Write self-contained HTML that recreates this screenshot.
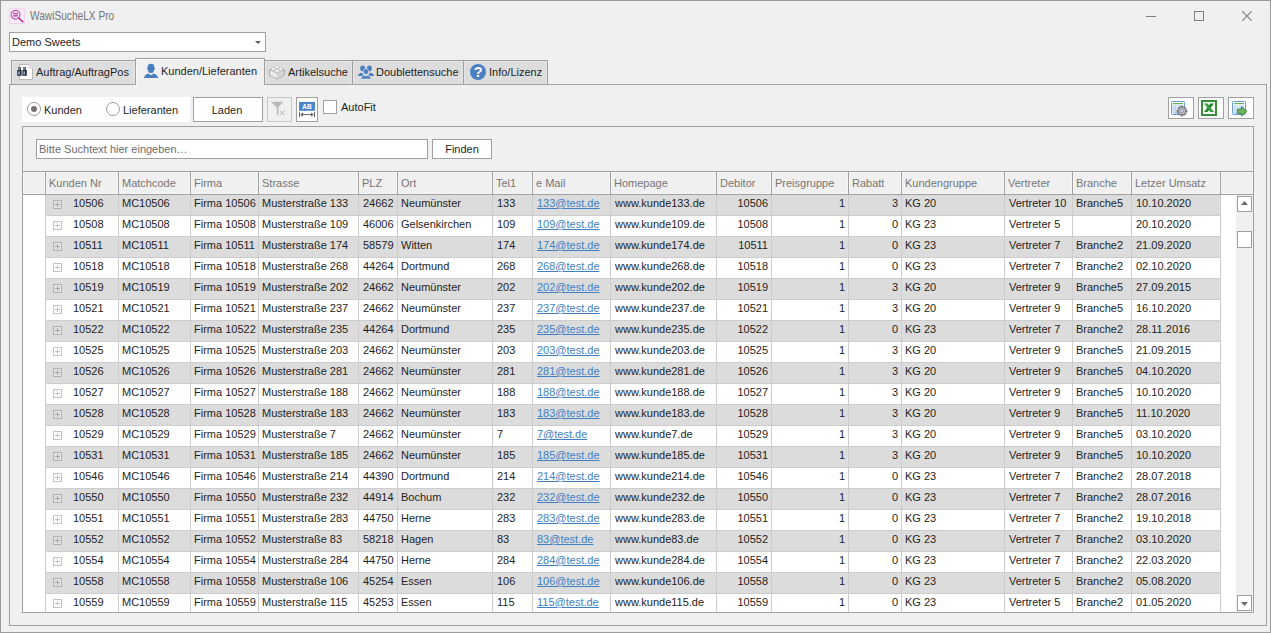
<!DOCTYPE html>
<html><head><meta charset="utf-8"><style>
*{box-sizing:border-box;margin:0;padding:0}
html,body{width:1271px;height:633px;overflow:hidden;background:#f0f0f0;font-family:"Liberation Sans",sans-serif;font-size:11px;color:#1e1e1e}
.abs{position:absolute}
.bd{border:1px solid #a0a0a0}
.t{position:absolute;white-space:pre;line-height:13px}
</style></head><body>

<div class="abs bd" style="left:0;top:0;width:1271px;height:633px;border-color:#9b9b9b"></div>
<svg class="abs" style="left:9px;top:8px" width="16" height="16" viewBox="0 0 16 16"><rect x="0.5" y="0.5" width="15" height="15" fill="#f9ecf8" stroke="#f0d4ed"/><circle cx="6.6" cy="6.7" r="4.4" fill="none" stroke="#c553b6" stroke-width="1.2"/><rect x="4.2" y="4.8" width="4.8" height="1.6" fill="#c553b6"/><rect x="4.2" y="7" width="4.8" height="1.6" fill="#c553b6"/><path d="M9.8 10L13.6 13.6" stroke="#b8389f" stroke-width="1.7" stroke-linecap="round"/></svg>
<div class="t" style="left:30px;top:9px;font-size:12px;line-height:14px;color:#767676;transform:scaleX(0.845);transform-origin:0 0">WawiSucheLX Pro</div>
<div class="abs" style="left:1146px;top:16px;width:10px;height:1px;background:#808080"></div>
<div class="abs" style="left:1194px;top:11px;width:10px;height:10px;border:1px solid #808080"></div>
<svg class="abs" style="left:1242px;top:11px" width="10" height="10"><path d="M0 0L10 10M10 0L0 10" stroke="#808080" stroke-width="1.2"/></svg>
<div class="abs bd" style="left:9px;top:32px;width:257px;height:20px;background:#fff"></div>
<div class="t" style="left:12px;top:36px">Demo Sweets</div>
<svg class="abs" style="left:255px;top:41px" width="6" height="3"><path d="M0 0H6L3 3Z" fill="#606060"/></svg>
<div class="abs bd" style="left:9px;top:84px;width:1258px;height:542px"></div>
<div class="abs bd" style="left:11px;top:60px;width:125px;height:25px;background:#dddddd;box-shadow:inset 1px 1px 0 #e6e6e6,inset -1px 0 0 #e6e6e6"></div>
<div class="t" style="left:36px;top:66px">Auftrag/AuftragPos</div>
<div class="abs bd" style="left:264px;top:60px;width:89px;height:25px;background:#dddddd;box-shadow:inset 1px 1px 0 #e6e6e6,inset -1px 0 0 #e6e6e6"></div>
<div class="t" style="left:288px;top:66px">Artikelsuche</div>
<div class="abs bd" style="left:352px;top:60px;width:112px;height:25px;background:#dddddd;box-shadow:inset 1px 1px 0 #e6e6e6,inset -1px 0 0 #e6e6e6"></div>
<div class="t" style="left:376px;top:66px">Doublettensuche</div>
<div class="abs bd" style="left:463px;top:60px;width:85px;height:25px;background:#dddddd;box-shadow:inset 1px 1px 0 #e6e6e6,inset -1px 0 0 #e6e6e6"></div>
<div class="t" style="left:489px;top:66px">Info/Lizenz</div>
<div class="abs bd" style="left:135px;top:58px;width:130px;height:27px;background:#f0f0f0;border-bottom:none;box-shadow:inset 1px 1px 0 #f8f8f8"></div>
<div class="t" style="left:161px;top:65px">Kunden/Lieferanten</div>
<svg class="abs" style="left:143px;top:63px" width="16" height="16" viewBox="0 0 16 16"><path d="M4.9 3.2Q4.9 0.8 8 0.8Q11.1 0.8 11.1 3.2V6.4Q11.1 9.9 8 9.9Q4.9 9.9 4.9 6.4Z" fill="#4a7fc0"/><ellipse cx="4.6" cy="5.6" rx="0.7" ry="1" fill="#4a7fc0"/><ellipse cx="11.4" cy="5.6" rx="0.7" ry="1" fill="#4a7fc0"/><path d="M1 15Q1.4 11.5 5.4 10.4L8 12.2L10.6 10.4Q14.6 11.5 15.1 15Z" fill="#4a7fc0"/></svg>
<svg class="abs" style="left:17px;top:64px" width="16" height="16" viewBox="0 0 16 16"><path d="M2.5 0.5H11.8L15.5 4.2V15.5H2.5Z" fill="#fff" stroke="#b8b8b8"/><path d="M11.8 0.5V4.2H15.5" fill="#f0f0f0" stroke="#d0d0d0" stroke-width="0.8"/><rect x="1.2" y="3" width="2.8" height="3.2" fill="#4a5868"/><rect x="6.2" y="3" width="2.8" height="3.2" fill="#4a5868"/><rect x="0.2" y="6" width="4.4" height="5.8" fill="#27313d"/><rect x="5.4" y="6" width="4.4" height="5.8" fill="#27313d"/><rect x="1.3" y="7.4" width="1.4" height="3.2" fill="#a9bdd2"/><rect x="6.5" y="7.4" width="1.4" height="3.2" fill="#a9bdd2"/><rect x="1.8" y="3.6" width="1" height="1.8" fill="#8fa3b8"/><rect x="6.8" y="3.6" width="1" height="1.8" fill="#8fa3b8"/></svg>
<svg class="abs" style="left:269px;top:64px" width="16" height="16" viewBox="0 0 16 16"><path d="M0.5 6L8 2.6L15.5 6V11L8 15L0.5 11Z" fill="#f2f2f2" stroke="#9c9c9c" stroke-width="0.9" stroke-linejoin="round"/><path d="M0.9 6.2L8 9.6V14.6L0.9 10.8Z" fill="#ececec"/><path d="M8 9.6L15.1 6.2V10.8L8 14.6Z" fill="#d6d6d6"/><path d="M0.9 6.2L8 9.6L15.1 6.2M8 9.6V14.6" fill="none" stroke="#bdbdbd" stroke-width="0.6"/><path d="M5.9 4.0V2.9A2.1 1.2 0 0 1 10.1 2.9V4.0A2.1 1.2 0 0 1 5.9 4.0Z" fill="#e6e6e6" stroke="#a8a8a8" stroke-width="0.6"/><ellipse cx="8" cy="2.9" rx="2.1" ry="1.2" fill="#ffffff" stroke="#b4b4b4" stroke-width="0.5"/><path d="M2.3000000000000003 5.9V4.800000000000001A2.1 1.2 0 0 1 6.5 4.800000000000001V5.9A2.1 1.2 0 0 1 2.3000000000000003 5.9Z" fill="#e6e6e6" stroke="#a8a8a8" stroke-width="0.6"/><ellipse cx="4.4" cy="4.800000000000001" rx="2.1" ry="1.2" fill="#ffffff" stroke="#b4b4b4" stroke-width="0.5"/><path d="M9.5 5.9V4.800000000000001A2.1 1.2 0 0 1 13.7 4.800000000000001V5.9A2.1 1.2 0 0 1 9.5 5.9Z" fill="#e6e6e6" stroke="#a8a8a8" stroke-width="0.6"/><ellipse cx="11.6" cy="4.800000000000001" rx="2.1" ry="1.2" fill="#ffffff" stroke="#b4b4b4" stroke-width="0.5"/><path d="M5.9 7.8V6.699999999999999A2.1 1.2 0 0 1 10.1 6.699999999999999V7.8A2.1 1.2 0 0 1 5.9 7.8Z" fill="#e6e6e6" stroke="#a8a8a8" stroke-width="0.6"/><ellipse cx="8" cy="6.699999999999999" rx="2.1" ry="1.2" fill="#ffffff" stroke="#b4b4b4" stroke-width="0.5"/></svg>
<svg class="abs" style="left:357px;top:64px" width="18" height="16" viewBox="0 0 18 16"><ellipse cx="5.6" cy="4.4" rx="2.4" ry="2.8" fill="#4a7fc0"/><ellipse cx="12.4" cy="4.4" rx="2.4" ry="2.8" fill="#4a7fc0"/><path d="M1 12C1.4 9.8 3 8.8 4.6 8.8L6.2 10.2V12Z" fill="#4a7fc0"/><path d="M17 12C16.6 9.8 15 8.8 13.4 8.8L11.8 10.2V12Z" fill="#4a7fc0"/><ellipse cx="9" cy="7.6" rx="2.6" ry="3" fill="#4a7fc0" stroke="#dcdcdc" stroke-width="0.8"/><path d="M3.8 15C4.2 12.8 5.8 11.6 7.4 11.4L9 12.2L10.6 11.4C12.2 11.6 13.8 12.8 14.2 15Z" fill="#4a7fc0" stroke="#dcdcdc" stroke-width="0.6"/></svg>
<svg class="abs" style="left:470px;top:64px" width="16" height="16" viewBox="0 0 16 16"><circle cx="8" cy="8" r="8" fill="#4a80c2"/><text x="8.1" y="13.4" font-family="Liberation Sans" font-weight="bold" font-size="14.5" fill="#fff" text-anchor="middle">?</text></svg>
<div class="abs" style="left:22px;top:97px;width:168px;height:25px;background:#fff"></div>
<div class="abs" style="left:27px;top:102px;width:14px;height:14px;border:1px solid #9a9a9a;border-radius:50%"></div>
<div class="abs" style="left:31px;top:106px;width:6px;height:6px;background:#737373;border-radius:50%"></div>
<div class="t" style="left:44px;top:104px">Kunden</div>
<div class="abs" style="left:106px;top:102px;width:14px;height:14px;border:1px solid #9a9a9a;border-radius:50%"></div>
<div class="t" style="left:123px;top:104px">Lieferanten</div>
<div class="abs bd" style="left:193px;top:97px;width:70px;height:25px;background:#fff"></div>
<div class="t" style="left:192px;top:104px;width:70px;text-align:center">Laden</div>
<div class="abs" style="left:267px;top:97px;width:25px;height:25px;border:1px solid #c8c8c8"></div>
<svg class="abs" style="left:270px;top:101px" width="18" height="16" viewBox="0 0 18 16"><path d="M1 0.8H13L8.4 6.4V14.6L6.8 13.4V6.4Z" fill="#bababa"/><path d="M9.8 9.6L14.6 14.4M14.6 9.6L9.8 14.4" stroke="#c4c4c4" stroke-width="1.1"/></svg>
<div class="abs bd" style="left:296px;top:97px;width:22px;height:25px;background:#fff"></div>
<svg class="abs" style="left:299px;top:101px" width="16" height="17" viewBox="0 0 16 17"><rect x="0" y="0.9" width="16" height="8.9" fill="#4a86cc"/><text x="8" y="8.2" font-family="Liberation Sans" font-weight="bold" font-size="6.6" fill="#fff" text-anchor="middle">AB</text><path d="M0.5 11.2V16M15.5 11.2V16M2 13.6H14" stroke="#5f6670" stroke-width="1"/><path d="M1.2 13.6L4 11.4V15.8Z M14.8 13.6L12 11.4V15.8Z" fill="#5f6670"/></svg>
<div class="abs bd" style="left:323px;top:100px;width:14px;height:14px;background:#fff"></div>
<div class="t" style="left:341px;top:101px">AutoFit</div>
<div class="abs bd" style="left:1168px;top:97px;width:26px;height:22px;background:#fff"></div>
<div class="abs bd" style="left:1198px;top:97px;width:26px;height:22px;background:#fff"></div>
<div class="abs bd" style="left:1228px;top:97px;width:26px;height:22px;background:#fff"></div>
<svg class="abs" style="left:1170px;top:100px" width="18" height="18" viewBox="0 0 18 18"><rect x="1.5" y="1.5" width="13" height="13" rx="0.8" fill="#fff" stroke="#6d9cda"/><rect x="3" y="3" width="10" height="1.2" fill="#62b45a"/><rect x="2.6" y="5.4" width="10.8" height="8.4" fill="#a9c4ee"/><g fill="#fff"><rect x="3.4" y="6.2" width="1.3" height="1.3"/><rect x="3.4" y="8.4" width="1.3" height="1.3"/><rect x="3.4" y="10.6" width="1.3" height="1.3"/><rect x="3.4" y="12.6" width="1.3" height="1"/><rect x="5.6" y="6.2" width="3.2" height="1.3"/><rect x="5.6" y="8.4" width="3.2" height="1.3"/><rect x="5.6" y="10.6" width="3.2" height="1.3"/></g><path d="M15.48 9.73L17.09 9.92L17.09 12.08L15.48 12.27L15.42 12.42L15.35 12.56L16.36 13.83L14.83 15.36L13.56 14.35L13.42 14.42L13.27 14.48L13.08 16.09L10.92 16.09L10.73 14.48L10.58 14.42L10.44 14.35L9.17 15.36L7.64 13.83L8.65 12.56L8.58 12.42L8.52 12.27L6.91 12.08L6.91 9.92L8.52 9.73L8.58 9.58L8.65 9.44L7.64 8.17L9.17 6.64L10.44 7.65L10.58 7.58L10.73 7.52L10.92 5.91L13.08 5.91L13.27 7.52L13.42 7.58L13.56 7.65L14.83 6.64L16.36 8.17L15.35 9.44L15.42 9.58Z" fill="#8c8c8c" stroke="#6a6a6a" stroke-width="0.5"/><circle cx="12" cy="11" r="2.9" fill="#c4c4c4"/><circle cx="12" cy="11" r="1.6" fill="#cfe2fb" stroke="#707070" stroke-width="0.6"/></svg>
<svg class="abs" style="left:1201px;top:100px" width="16" height="16" viewBox="0 0 16 16"><rect x="1" y="1" width="14" height="14" fill="#f6fbf6" stroke="#3a8d3a" stroke-width="2"/><path d="M3 3.4H6.6L13 12H9.4Z" fill="#2f9a36"/><path d="M13 3.4H9.4L3 12H6.6Z" fill="#27862d"/><path d="M4.5 4.2L11.5 11.2" stroke="#7ccc7c" stroke-width="0.7"/></svg>
<svg class="abs" style="left:1231px;top:100px" width="18" height="17" viewBox="0 0 18 17"><rect x="1.5" y="1.5" width="13" height="13" rx="0.8" fill="#fff" stroke="#6d9cda"/><rect x="3" y="3" width="10" height="1.2" fill="#62b45a"/><rect x="2.6" y="5.6" width="10.8" height="8.2" fill="#b6cdf0"/><g fill="#fff"><rect x="3.4" y="6.4" width="1.2" height="1.2"/><rect x="3.4" y="8.6" width="1.2" height="1.2"/><rect x="3.4" y="10.8" width="1.2" height="1.2"/><rect x="5.6" y="6.4" width="3" height="1.2"/><rect x="5.6" y="8.6" width="3" height="1.2"/></g><path d="M6.6 9.2H10.6V7L16 11.4L10.6 15.8V13.6H6.6Z" fill="#6fb55f" stroke="#2e8a2a" stroke-width="0.9"/></svg>
<div class="abs bd" style="left:22px;top:126px;width:1232px;height:487px"></div>
<div class="abs bd" style="left:36px;top:139px;width:392px;height:20px;background:#fff"></div>
<div class="t" style="left:39px;top:143px;color:#6d6d6d">Bitte Suchtext hier eingeben…</div>
<div class="abs bd" style="left:432px;top:139px;width:60px;height:20px;background:#fff"></div>
<div class="t" style="left:432px;top:143px;width:60px;text-align:center">Finden</div>
<div class="abs" style="left:22px;top:171px;width:1232px;height:1px;background:#a0a0a0"></div>
<div class="abs" style="left:22px;top:194px;width:1232px;height:1px;background:#a0a0a0"></div>
<div class="abs" style="left:45px;top:172px;width:1px;height:22px;background:#a0a0a0"></div>
<div class="abs" style="left:118px;top:172px;width:1px;height:22px;background:#a0a0a0"></div>
<div class="abs" style="left:190px;top:172px;width:1px;height:22px;background:#a0a0a0"></div>
<div class="abs" style="left:258px;top:172px;width:1px;height:22px;background:#a0a0a0"></div>
<div class="abs" style="left:358px;top:172px;width:1px;height:22px;background:#a0a0a0"></div>
<div class="abs" style="left:397px;top:172px;width:1px;height:22px;background:#a0a0a0"></div>
<div class="abs" style="left:492px;top:172px;width:1px;height:22px;background:#a0a0a0"></div>
<div class="abs" style="left:532px;top:172px;width:1px;height:22px;background:#a0a0a0"></div>
<div class="abs" style="left:610px;top:172px;width:1px;height:22px;background:#a0a0a0"></div>
<div class="abs" style="left:716px;top:172px;width:1px;height:22px;background:#a0a0a0"></div>
<div class="abs" style="left:771px;top:172px;width:1px;height:22px;background:#a0a0a0"></div>
<div class="abs" style="left:848px;top:172px;width:1px;height:22px;background:#a0a0a0"></div>
<div class="abs" style="left:901px;top:172px;width:1px;height:22px;background:#a0a0a0"></div>
<div class="abs" style="left:1004px;top:172px;width:1px;height:22px;background:#a0a0a0"></div>
<div class="abs" style="left:1072px;top:172px;width:1px;height:22px;background:#a0a0a0"></div>
<div class="abs" style="left:1131px;top:172px;width:1px;height:22px;background:#a0a0a0"></div>
<div class="abs" style="left:1220px;top:172px;width:1px;height:22px;background:#a0a0a0"></div>
<div class="abs" style="left:46px;top:172px;width:72px;height:22px;box-shadow:inset 1px 1px 0 #f6f6f6,inset -1px -1px 0 #f6f6f6"></div>
<div class="abs" style="left:119px;top:172px;width:71px;height:22px;box-shadow:inset 1px 1px 0 #f6f6f6,inset -1px -1px 0 #f6f6f6"></div>
<div class="abs" style="left:191px;top:172px;width:67px;height:22px;box-shadow:inset 1px 1px 0 #f6f6f6,inset -1px -1px 0 #f6f6f6"></div>
<div class="abs" style="left:259px;top:172px;width:99px;height:22px;box-shadow:inset 1px 1px 0 #f6f6f6,inset -1px -1px 0 #f6f6f6"></div>
<div class="abs" style="left:359px;top:172px;width:38px;height:22px;box-shadow:inset 1px 1px 0 #f6f6f6,inset -1px -1px 0 #f6f6f6"></div>
<div class="abs" style="left:398px;top:172px;width:94px;height:22px;box-shadow:inset 1px 1px 0 #f6f6f6,inset -1px -1px 0 #f6f6f6"></div>
<div class="abs" style="left:493px;top:172px;width:39px;height:22px;box-shadow:inset 1px 1px 0 #f6f6f6,inset -1px -1px 0 #f6f6f6"></div>
<div class="abs" style="left:533px;top:172px;width:77px;height:22px;box-shadow:inset 1px 1px 0 #f6f6f6,inset -1px -1px 0 #f6f6f6"></div>
<div class="abs" style="left:611px;top:172px;width:105px;height:22px;box-shadow:inset 1px 1px 0 #f6f6f6,inset -1px -1px 0 #f6f6f6"></div>
<div class="abs" style="left:717px;top:172px;width:54px;height:22px;box-shadow:inset 1px 1px 0 #f6f6f6,inset -1px -1px 0 #f6f6f6"></div>
<div class="abs" style="left:772px;top:172px;width:76px;height:22px;box-shadow:inset 1px 1px 0 #f6f6f6,inset -1px -1px 0 #f6f6f6"></div>
<div class="abs" style="left:849px;top:172px;width:52px;height:22px;box-shadow:inset 1px 1px 0 #f6f6f6,inset -1px -1px 0 #f6f6f6"></div>
<div class="abs" style="left:902px;top:172px;width:102px;height:22px;box-shadow:inset 1px 1px 0 #f6f6f6,inset -1px -1px 0 #f6f6f6"></div>
<div class="abs" style="left:1005px;top:172px;width:67px;height:22px;box-shadow:inset 1px 1px 0 #f6f6f6,inset -1px -1px 0 #f6f6f6"></div>
<div class="abs" style="left:1073px;top:172px;width:58px;height:22px;box-shadow:inset 1px 1px 0 #f6f6f6,inset -1px -1px 0 #f6f6f6"></div>
<div class="abs" style="left:1132px;top:172px;width:88px;height:22px;box-shadow:inset 1px 1px 0 #f6f6f6,inset -1px -1px 0 #f6f6f6"></div>
<div class="abs" style="left:23px;top:172px;width:22px;height:22px;box-shadow:inset 1px 1px 0 #f6f6f6,inset -1px -1px 0 #f6f6f6"></div>
<div class="abs" style="left:1221px;top:172px;width:32px;height:22px;box-shadow:inset 1px 1px 0 #f6f6f6,inset -1px -1px 0 #f6f6f6"></div>
<div class="t" style="left:49px;top:177px;color:#767676">Kunden Nr</div>
<div class="t" style="left:122px;top:177px;color:#767676">Matchcode</div>
<div class="t" style="left:194px;top:177px;color:#767676">Firma</div>
<div class="t" style="left:262px;top:177px;color:#767676">Strasse</div>
<div class="t" style="left:362px;top:177px;color:#767676">PLZ</div>
<div class="t" style="left:401px;top:177px;color:#767676">Ort</div>
<div class="t" style="left:496px;top:177px;color:#767676">Tel1</div>
<div class="t" style="left:536px;top:177px;color:#767676">e Mail</div>
<div class="t" style="left:614px;top:177px;color:#767676">Homepage</div>
<div class="t" style="left:720px;top:177px;color:#767676">Debitor</div>
<div class="t" style="left:775px;top:177px;color:#767676">Preisgruppe</div>
<div class="t" style="left:852px;top:177px;color:#767676">Rabatt</div>
<div class="t" style="left:905px;top:177px;color:#767676">Kundengruppe</div>
<div class="t" style="left:1008px;top:177px;color:#767676">Vertreter</div>
<div class="t" style="left:1076px;top:177px;color:#767676">Branche</div>
<div class="t" style="left:1135px;top:177px;color:#767676">Letzer Umsatz</div>
<div class="abs" style="left:46px;top:195px;width:1174px;height:20px;background:#dcdcdc"></div>
<div class="abs" style="left:46px;top:215px;width:1174px;height:1px;background:#cdcdcd"></div>
<div class="abs" style="left:53px;top:200px;width:9px;height:9px;border:1px solid #b2b2b2;background:#e2e2e2"></div>
<div class="abs" style="left:55px;top:204px;width:5px;height:1px;background:#a8a8a8"></div>
<div class="abs" style="left:57px;top:202px;width:1px;height:5px;background:#a8a8a8"></div>
<div class="t" style="top:197px;left:73px;color:#1e1e1e;">10506</div>
<div class="t" style="top:197px;left:122px;color:#1e1e1e;">MC10506</div>
<div class="t" style="top:197px;left:194px;color:#1e1e1e;">Firma 10506</div>
<div class="t" style="top:197px;left:262px;color:#1e1e1e;">Musterstraße 133</div>
<div class="t" style="top:197px;left:363px;color:#1e1e1e;">24662</div>
<div class="t" style="top:197px;left:401px;color:#1e1e1e;">Neumünster</div>
<div class="t" style="top:197px;left:497px;color:#1e1e1e;">133</div>
<div class="t" style="top:197px;left:537px;color:#3f7fc4;text-decoration:underline;">133@test.de</div>
<div class="t" style="top:197px;left:615px;color:#1e1e1e;">www.kunde133.de</div>
<div class="t" style="top:197px;left:717px;width:51px;text-align:right;color:#1e1e1e;">10506</div>
<div class="t" style="top:197px;left:772px;width:73px;text-align:right;color:#1e1e1e;">1</div>
<div class="t" style="top:197px;left:849px;width:49px;text-align:right;color:#1e1e1e;">3</div>
<div class="t" style="top:197px;left:905px;color:#1e1e1e;">KG 20</div>
<div class="t" style="top:197px;left:1009px;color:#1e1e1e;">Vertreter 10</div>
<div class="t" style="top:197px;left:1076px;color:#1e1e1e;">Branche5</div>
<div class="t" style="top:197px;left:1136px;color:#1e1e1e;">10.10.2020</div>
<div class="abs" style="left:46px;top:216px;width:1174px;height:20px;background:#fff"></div>
<div class="abs" style="left:46px;top:236px;width:1174px;height:1px;background:#cdcdcd"></div>
<div class="abs" style="left:53px;top:221px;width:9px;height:9px;border:1px solid #c4c4c4;background:#ffffff"></div>
<div class="abs" style="left:55px;top:225px;width:5px;height:1px;background:#c4c4c4"></div>
<div class="abs" style="left:57px;top:223px;width:1px;height:5px;background:#c4c4c4"></div>
<div class="t" style="top:218px;left:73px;color:#1e1e1e;">10508</div>
<div class="t" style="top:218px;left:122px;color:#1e1e1e;">MC10508</div>
<div class="t" style="top:218px;left:194px;color:#1e1e1e;">Firma 10508</div>
<div class="t" style="top:218px;left:262px;color:#1e1e1e;">Musterstraße 109</div>
<div class="t" style="top:218px;left:363px;color:#1e1e1e;">46006</div>
<div class="t" style="top:218px;left:401px;color:#1e1e1e;">Gelsenkirchen</div>
<div class="t" style="top:218px;left:497px;color:#1e1e1e;">109</div>
<div class="t" style="top:218px;left:537px;color:#3f7fc4;text-decoration:underline;">109@test.de</div>
<div class="t" style="top:218px;left:615px;color:#1e1e1e;">www.kunde109.de</div>
<div class="t" style="top:218px;left:717px;width:51px;text-align:right;color:#1e1e1e;">10508</div>
<div class="t" style="top:218px;left:772px;width:73px;text-align:right;color:#1e1e1e;">1</div>
<div class="t" style="top:218px;left:849px;width:49px;text-align:right;color:#1e1e1e;">0</div>
<div class="t" style="top:218px;left:905px;color:#1e1e1e;">KG 23</div>
<div class="t" style="top:218px;left:1009px;color:#1e1e1e;">Vertreter 5</div>
<div class="t" style="top:218px;left:1076px;color:#1e1e1e;"></div>
<div class="t" style="top:218px;left:1136px;color:#1e1e1e;">20.10.2020</div>
<div class="abs" style="left:46px;top:237px;width:1174px;height:20px;background:#dcdcdc"></div>
<div class="abs" style="left:46px;top:257px;width:1174px;height:1px;background:#cdcdcd"></div>
<div class="abs" style="left:53px;top:242px;width:9px;height:9px;border:1px solid #b2b2b2;background:#e2e2e2"></div>
<div class="abs" style="left:55px;top:246px;width:5px;height:1px;background:#a8a8a8"></div>
<div class="abs" style="left:57px;top:244px;width:1px;height:5px;background:#a8a8a8"></div>
<div class="t" style="top:239px;left:73px;color:#1e1e1e;">10511</div>
<div class="t" style="top:239px;left:122px;color:#1e1e1e;">MC10511</div>
<div class="t" style="top:239px;left:194px;color:#1e1e1e;">Firma 10511</div>
<div class="t" style="top:239px;left:262px;color:#1e1e1e;">Musterstraße 174</div>
<div class="t" style="top:239px;left:363px;color:#1e1e1e;">58579</div>
<div class="t" style="top:239px;left:401px;color:#1e1e1e;">Witten</div>
<div class="t" style="top:239px;left:497px;color:#1e1e1e;">174</div>
<div class="t" style="top:239px;left:537px;color:#3f7fc4;text-decoration:underline;">174@test.de</div>
<div class="t" style="top:239px;left:615px;color:#1e1e1e;">www.kunde174.de</div>
<div class="t" style="top:239px;left:717px;width:51px;text-align:right;color:#1e1e1e;">10511</div>
<div class="t" style="top:239px;left:772px;width:73px;text-align:right;color:#1e1e1e;">1</div>
<div class="t" style="top:239px;left:849px;width:49px;text-align:right;color:#1e1e1e;">0</div>
<div class="t" style="top:239px;left:905px;color:#1e1e1e;">KG 23</div>
<div class="t" style="top:239px;left:1009px;color:#1e1e1e;">Vertreter 7</div>
<div class="t" style="top:239px;left:1076px;color:#1e1e1e;">Branche2</div>
<div class="t" style="top:239px;left:1136px;color:#1e1e1e;">21.09.2020</div>
<div class="abs" style="left:46px;top:258px;width:1174px;height:20px;background:#fff"></div>
<div class="abs" style="left:46px;top:278px;width:1174px;height:1px;background:#cdcdcd"></div>
<div class="abs" style="left:53px;top:263px;width:9px;height:9px;border:1px solid #c4c4c4;background:#ffffff"></div>
<div class="abs" style="left:55px;top:267px;width:5px;height:1px;background:#c4c4c4"></div>
<div class="abs" style="left:57px;top:265px;width:1px;height:5px;background:#c4c4c4"></div>
<div class="t" style="top:260px;left:73px;color:#1e1e1e;">10518</div>
<div class="t" style="top:260px;left:122px;color:#1e1e1e;">MC10518</div>
<div class="t" style="top:260px;left:194px;color:#1e1e1e;">Firma 10518</div>
<div class="t" style="top:260px;left:262px;color:#1e1e1e;">Musterstraße 268</div>
<div class="t" style="top:260px;left:363px;color:#1e1e1e;">44264</div>
<div class="t" style="top:260px;left:401px;color:#1e1e1e;">Dortmund</div>
<div class="t" style="top:260px;left:497px;color:#1e1e1e;">268</div>
<div class="t" style="top:260px;left:537px;color:#3f7fc4;text-decoration:underline;">268@test.de</div>
<div class="t" style="top:260px;left:615px;color:#1e1e1e;">www.kunde268.de</div>
<div class="t" style="top:260px;left:717px;width:51px;text-align:right;color:#1e1e1e;">10518</div>
<div class="t" style="top:260px;left:772px;width:73px;text-align:right;color:#1e1e1e;">1</div>
<div class="t" style="top:260px;left:849px;width:49px;text-align:right;color:#1e1e1e;">0</div>
<div class="t" style="top:260px;left:905px;color:#1e1e1e;">KG 23</div>
<div class="t" style="top:260px;left:1009px;color:#1e1e1e;">Vertreter 7</div>
<div class="t" style="top:260px;left:1076px;color:#1e1e1e;">Branche2</div>
<div class="t" style="top:260px;left:1136px;color:#1e1e1e;">02.10.2020</div>
<div class="abs" style="left:46px;top:279px;width:1174px;height:20px;background:#dcdcdc"></div>
<div class="abs" style="left:46px;top:299px;width:1174px;height:1px;background:#cdcdcd"></div>
<div class="abs" style="left:53px;top:284px;width:9px;height:9px;border:1px solid #b2b2b2;background:#e2e2e2"></div>
<div class="abs" style="left:55px;top:288px;width:5px;height:1px;background:#a8a8a8"></div>
<div class="abs" style="left:57px;top:286px;width:1px;height:5px;background:#a8a8a8"></div>
<div class="t" style="top:281px;left:73px;color:#1e1e1e;">10519</div>
<div class="t" style="top:281px;left:122px;color:#1e1e1e;">MC10519</div>
<div class="t" style="top:281px;left:194px;color:#1e1e1e;">Firma 10519</div>
<div class="t" style="top:281px;left:262px;color:#1e1e1e;">Musterstraße 202</div>
<div class="t" style="top:281px;left:363px;color:#1e1e1e;">24662</div>
<div class="t" style="top:281px;left:401px;color:#1e1e1e;">Neumünster</div>
<div class="t" style="top:281px;left:497px;color:#1e1e1e;">202</div>
<div class="t" style="top:281px;left:537px;color:#3f7fc4;text-decoration:underline;">202@test.de</div>
<div class="t" style="top:281px;left:615px;color:#1e1e1e;">www.kunde202.de</div>
<div class="t" style="top:281px;left:717px;width:51px;text-align:right;color:#1e1e1e;">10519</div>
<div class="t" style="top:281px;left:772px;width:73px;text-align:right;color:#1e1e1e;">1</div>
<div class="t" style="top:281px;left:849px;width:49px;text-align:right;color:#1e1e1e;">3</div>
<div class="t" style="top:281px;left:905px;color:#1e1e1e;">KG 20</div>
<div class="t" style="top:281px;left:1009px;color:#1e1e1e;">Vertreter 9</div>
<div class="t" style="top:281px;left:1076px;color:#1e1e1e;">Branche5</div>
<div class="t" style="top:281px;left:1136px;color:#1e1e1e;">27.09.2015</div>
<div class="abs" style="left:46px;top:300px;width:1174px;height:20px;background:#fff"></div>
<div class="abs" style="left:46px;top:320px;width:1174px;height:1px;background:#cdcdcd"></div>
<div class="abs" style="left:53px;top:305px;width:9px;height:9px;border:1px solid #c4c4c4;background:#ffffff"></div>
<div class="abs" style="left:55px;top:309px;width:5px;height:1px;background:#c4c4c4"></div>
<div class="abs" style="left:57px;top:307px;width:1px;height:5px;background:#c4c4c4"></div>
<div class="t" style="top:302px;left:73px;color:#1e1e1e;">10521</div>
<div class="t" style="top:302px;left:122px;color:#1e1e1e;">MC10521</div>
<div class="t" style="top:302px;left:194px;color:#1e1e1e;">Firma 10521</div>
<div class="t" style="top:302px;left:262px;color:#1e1e1e;">Musterstraße 237</div>
<div class="t" style="top:302px;left:363px;color:#1e1e1e;">24662</div>
<div class="t" style="top:302px;left:401px;color:#1e1e1e;">Neumünster</div>
<div class="t" style="top:302px;left:497px;color:#1e1e1e;">237</div>
<div class="t" style="top:302px;left:537px;color:#3f7fc4;text-decoration:underline;">237@test.de</div>
<div class="t" style="top:302px;left:615px;color:#1e1e1e;">www.kunde237.de</div>
<div class="t" style="top:302px;left:717px;width:51px;text-align:right;color:#1e1e1e;">10521</div>
<div class="t" style="top:302px;left:772px;width:73px;text-align:right;color:#1e1e1e;">1</div>
<div class="t" style="top:302px;left:849px;width:49px;text-align:right;color:#1e1e1e;">3</div>
<div class="t" style="top:302px;left:905px;color:#1e1e1e;">KG 20</div>
<div class="t" style="top:302px;left:1009px;color:#1e1e1e;">Vertreter 9</div>
<div class="t" style="top:302px;left:1076px;color:#1e1e1e;">Branche5</div>
<div class="t" style="top:302px;left:1136px;color:#1e1e1e;">16.10.2020</div>
<div class="abs" style="left:46px;top:321px;width:1174px;height:20px;background:#dcdcdc"></div>
<div class="abs" style="left:46px;top:341px;width:1174px;height:1px;background:#cdcdcd"></div>
<div class="abs" style="left:53px;top:326px;width:9px;height:9px;border:1px solid #b2b2b2;background:#e2e2e2"></div>
<div class="abs" style="left:55px;top:330px;width:5px;height:1px;background:#a8a8a8"></div>
<div class="abs" style="left:57px;top:328px;width:1px;height:5px;background:#a8a8a8"></div>
<div class="t" style="top:323px;left:73px;color:#1e1e1e;">10522</div>
<div class="t" style="top:323px;left:122px;color:#1e1e1e;">MC10522</div>
<div class="t" style="top:323px;left:194px;color:#1e1e1e;">Firma 10522</div>
<div class="t" style="top:323px;left:262px;color:#1e1e1e;">Musterstraße 235</div>
<div class="t" style="top:323px;left:363px;color:#1e1e1e;">44264</div>
<div class="t" style="top:323px;left:401px;color:#1e1e1e;">Dortmund</div>
<div class="t" style="top:323px;left:497px;color:#1e1e1e;">235</div>
<div class="t" style="top:323px;left:537px;color:#3f7fc4;text-decoration:underline;">235@test.de</div>
<div class="t" style="top:323px;left:615px;color:#1e1e1e;">www.kunde235.de</div>
<div class="t" style="top:323px;left:717px;width:51px;text-align:right;color:#1e1e1e;">10522</div>
<div class="t" style="top:323px;left:772px;width:73px;text-align:right;color:#1e1e1e;">1</div>
<div class="t" style="top:323px;left:849px;width:49px;text-align:right;color:#1e1e1e;">0</div>
<div class="t" style="top:323px;left:905px;color:#1e1e1e;">KG 23</div>
<div class="t" style="top:323px;left:1009px;color:#1e1e1e;">Vertreter 7</div>
<div class="t" style="top:323px;left:1076px;color:#1e1e1e;">Branche2</div>
<div class="t" style="top:323px;left:1136px;color:#1e1e1e;">28.11.2016</div>
<div class="abs" style="left:46px;top:342px;width:1174px;height:20px;background:#fff"></div>
<div class="abs" style="left:46px;top:362px;width:1174px;height:1px;background:#cdcdcd"></div>
<div class="abs" style="left:53px;top:347px;width:9px;height:9px;border:1px solid #c4c4c4;background:#ffffff"></div>
<div class="abs" style="left:55px;top:351px;width:5px;height:1px;background:#c4c4c4"></div>
<div class="abs" style="left:57px;top:349px;width:1px;height:5px;background:#c4c4c4"></div>
<div class="t" style="top:344px;left:73px;color:#1e1e1e;">10525</div>
<div class="t" style="top:344px;left:122px;color:#1e1e1e;">MC10525</div>
<div class="t" style="top:344px;left:194px;color:#1e1e1e;">Firma 10525</div>
<div class="t" style="top:344px;left:262px;color:#1e1e1e;">Musterstraße 203</div>
<div class="t" style="top:344px;left:363px;color:#1e1e1e;">24662</div>
<div class="t" style="top:344px;left:401px;color:#1e1e1e;">Neumünster</div>
<div class="t" style="top:344px;left:497px;color:#1e1e1e;">203</div>
<div class="t" style="top:344px;left:537px;color:#3f7fc4;text-decoration:underline;">203@test.de</div>
<div class="t" style="top:344px;left:615px;color:#1e1e1e;">www.kunde203.de</div>
<div class="t" style="top:344px;left:717px;width:51px;text-align:right;color:#1e1e1e;">10525</div>
<div class="t" style="top:344px;left:772px;width:73px;text-align:right;color:#1e1e1e;">1</div>
<div class="t" style="top:344px;left:849px;width:49px;text-align:right;color:#1e1e1e;">3</div>
<div class="t" style="top:344px;left:905px;color:#1e1e1e;">KG 20</div>
<div class="t" style="top:344px;left:1009px;color:#1e1e1e;">Vertreter 9</div>
<div class="t" style="top:344px;left:1076px;color:#1e1e1e;">Branche5</div>
<div class="t" style="top:344px;left:1136px;color:#1e1e1e;">21.09.2015</div>
<div class="abs" style="left:46px;top:363px;width:1174px;height:20px;background:#dcdcdc"></div>
<div class="abs" style="left:46px;top:383px;width:1174px;height:1px;background:#cdcdcd"></div>
<div class="abs" style="left:53px;top:368px;width:9px;height:9px;border:1px solid #b2b2b2;background:#e2e2e2"></div>
<div class="abs" style="left:55px;top:372px;width:5px;height:1px;background:#a8a8a8"></div>
<div class="abs" style="left:57px;top:370px;width:1px;height:5px;background:#a8a8a8"></div>
<div class="t" style="top:365px;left:73px;color:#1e1e1e;">10526</div>
<div class="t" style="top:365px;left:122px;color:#1e1e1e;">MC10526</div>
<div class="t" style="top:365px;left:194px;color:#1e1e1e;">Firma 10526</div>
<div class="t" style="top:365px;left:262px;color:#1e1e1e;">Musterstraße 281</div>
<div class="t" style="top:365px;left:363px;color:#1e1e1e;">24662</div>
<div class="t" style="top:365px;left:401px;color:#1e1e1e;">Neumünster</div>
<div class="t" style="top:365px;left:497px;color:#1e1e1e;">281</div>
<div class="t" style="top:365px;left:537px;color:#3f7fc4;text-decoration:underline;">281@test.de</div>
<div class="t" style="top:365px;left:615px;color:#1e1e1e;">www.kunde281.de</div>
<div class="t" style="top:365px;left:717px;width:51px;text-align:right;color:#1e1e1e;">10526</div>
<div class="t" style="top:365px;left:772px;width:73px;text-align:right;color:#1e1e1e;">1</div>
<div class="t" style="top:365px;left:849px;width:49px;text-align:right;color:#1e1e1e;">3</div>
<div class="t" style="top:365px;left:905px;color:#1e1e1e;">KG 20</div>
<div class="t" style="top:365px;left:1009px;color:#1e1e1e;">Vertreter 9</div>
<div class="t" style="top:365px;left:1076px;color:#1e1e1e;">Branche5</div>
<div class="t" style="top:365px;left:1136px;color:#1e1e1e;">04.10.2020</div>
<div class="abs" style="left:46px;top:384px;width:1174px;height:20px;background:#fff"></div>
<div class="abs" style="left:46px;top:404px;width:1174px;height:1px;background:#cdcdcd"></div>
<div class="abs" style="left:53px;top:389px;width:9px;height:9px;border:1px solid #c4c4c4;background:#ffffff"></div>
<div class="abs" style="left:55px;top:393px;width:5px;height:1px;background:#c4c4c4"></div>
<div class="abs" style="left:57px;top:391px;width:1px;height:5px;background:#c4c4c4"></div>
<div class="t" style="top:386px;left:73px;color:#1e1e1e;">10527</div>
<div class="t" style="top:386px;left:122px;color:#1e1e1e;">MC10527</div>
<div class="t" style="top:386px;left:194px;color:#1e1e1e;">Firma 10527</div>
<div class="t" style="top:386px;left:262px;color:#1e1e1e;">Musterstraße 188</div>
<div class="t" style="top:386px;left:363px;color:#1e1e1e;">24662</div>
<div class="t" style="top:386px;left:401px;color:#1e1e1e;">Neumünster</div>
<div class="t" style="top:386px;left:497px;color:#1e1e1e;">188</div>
<div class="t" style="top:386px;left:537px;color:#3f7fc4;text-decoration:underline;">188@test.de</div>
<div class="t" style="top:386px;left:615px;color:#1e1e1e;">www.kunde188.de</div>
<div class="t" style="top:386px;left:717px;width:51px;text-align:right;color:#1e1e1e;">10527</div>
<div class="t" style="top:386px;left:772px;width:73px;text-align:right;color:#1e1e1e;">1</div>
<div class="t" style="top:386px;left:849px;width:49px;text-align:right;color:#1e1e1e;">3</div>
<div class="t" style="top:386px;left:905px;color:#1e1e1e;">KG 20</div>
<div class="t" style="top:386px;left:1009px;color:#1e1e1e;">Vertreter 9</div>
<div class="t" style="top:386px;left:1076px;color:#1e1e1e;">Branche5</div>
<div class="t" style="top:386px;left:1136px;color:#1e1e1e;">10.10.2020</div>
<div class="abs" style="left:46px;top:405px;width:1174px;height:20px;background:#dcdcdc"></div>
<div class="abs" style="left:46px;top:425px;width:1174px;height:1px;background:#cdcdcd"></div>
<div class="abs" style="left:53px;top:410px;width:9px;height:9px;border:1px solid #b2b2b2;background:#e2e2e2"></div>
<div class="abs" style="left:55px;top:414px;width:5px;height:1px;background:#a8a8a8"></div>
<div class="abs" style="left:57px;top:412px;width:1px;height:5px;background:#a8a8a8"></div>
<div class="t" style="top:407px;left:73px;color:#1e1e1e;">10528</div>
<div class="t" style="top:407px;left:122px;color:#1e1e1e;">MC10528</div>
<div class="t" style="top:407px;left:194px;color:#1e1e1e;">Firma 10528</div>
<div class="t" style="top:407px;left:262px;color:#1e1e1e;">Musterstraße 183</div>
<div class="t" style="top:407px;left:363px;color:#1e1e1e;">24662</div>
<div class="t" style="top:407px;left:401px;color:#1e1e1e;">Neumünster</div>
<div class="t" style="top:407px;left:497px;color:#1e1e1e;">183</div>
<div class="t" style="top:407px;left:537px;color:#3f7fc4;text-decoration:underline;">183@test.de</div>
<div class="t" style="top:407px;left:615px;color:#1e1e1e;">www.kunde183.de</div>
<div class="t" style="top:407px;left:717px;width:51px;text-align:right;color:#1e1e1e;">10528</div>
<div class="t" style="top:407px;left:772px;width:73px;text-align:right;color:#1e1e1e;">1</div>
<div class="t" style="top:407px;left:849px;width:49px;text-align:right;color:#1e1e1e;">3</div>
<div class="t" style="top:407px;left:905px;color:#1e1e1e;">KG 20</div>
<div class="t" style="top:407px;left:1009px;color:#1e1e1e;">Vertreter 9</div>
<div class="t" style="top:407px;left:1076px;color:#1e1e1e;">Branche5</div>
<div class="t" style="top:407px;left:1136px;color:#1e1e1e;">11.10.2020</div>
<div class="abs" style="left:46px;top:426px;width:1174px;height:20px;background:#fff"></div>
<div class="abs" style="left:46px;top:446px;width:1174px;height:1px;background:#cdcdcd"></div>
<div class="abs" style="left:53px;top:431px;width:9px;height:9px;border:1px solid #c4c4c4;background:#ffffff"></div>
<div class="abs" style="left:55px;top:435px;width:5px;height:1px;background:#c4c4c4"></div>
<div class="abs" style="left:57px;top:433px;width:1px;height:5px;background:#c4c4c4"></div>
<div class="t" style="top:428px;left:73px;color:#1e1e1e;">10529</div>
<div class="t" style="top:428px;left:122px;color:#1e1e1e;">MC10529</div>
<div class="t" style="top:428px;left:194px;color:#1e1e1e;">Firma 10529</div>
<div class="t" style="top:428px;left:262px;color:#1e1e1e;">Musterstraße 7</div>
<div class="t" style="top:428px;left:363px;color:#1e1e1e;">24662</div>
<div class="t" style="top:428px;left:401px;color:#1e1e1e;">Neumünster</div>
<div class="t" style="top:428px;left:497px;color:#1e1e1e;">7</div>
<div class="t" style="top:428px;left:537px;color:#3f7fc4;text-decoration:underline;">7@test.de</div>
<div class="t" style="top:428px;left:615px;color:#1e1e1e;">www.kunde7.de</div>
<div class="t" style="top:428px;left:717px;width:51px;text-align:right;color:#1e1e1e;">10529</div>
<div class="t" style="top:428px;left:772px;width:73px;text-align:right;color:#1e1e1e;">1</div>
<div class="t" style="top:428px;left:849px;width:49px;text-align:right;color:#1e1e1e;">3</div>
<div class="t" style="top:428px;left:905px;color:#1e1e1e;">KG 20</div>
<div class="t" style="top:428px;left:1009px;color:#1e1e1e;">Vertreter 9</div>
<div class="t" style="top:428px;left:1076px;color:#1e1e1e;">Branche5</div>
<div class="t" style="top:428px;left:1136px;color:#1e1e1e;">03.10.2020</div>
<div class="abs" style="left:46px;top:447px;width:1174px;height:20px;background:#dcdcdc"></div>
<div class="abs" style="left:46px;top:467px;width:1174px;height:1px;background:#cdcdcd"></div>
<div class="abs" style="left:53px;top:452px;width:9px;height:9px;border:1px solid #b2b2b2;background:#e2e2e2"></div>
<div class="abs" style="left:55px;top:456px;width:5px;height:1px;background:#a8a8a8"></div>
<div class="abs" style="left:57px;top:454px;width:1px;height:5px;background:#a8a8a8"></div>
<div class="t" style="top:449px;left:73px;color:#1e1e1e;">10531</div>
<div class="t" style="top:449px;left:122px;color:#1e1e1e;">MC10531</div>
<div class="t" style="top:449px;left:194px;color:#1e1e1e;">Firma 10531</div>
<div class="t" style="top:449px;left:262px;color:#1e1e1e;">Musterstraße 185</div>
<div class="t" style="top:449px;left:363px;color:#1e1e1e;">24662</div>
<div class="t" style="top:449px;left:401px;color:#1e1e1e;">Neumünster</div>
<div class="t" style="top:449px;left:497px;color:#1e1e1e;">185</div>
<div class="t" style="top:449px;left:537px;color:#3f7fc4;text-decoration:underline;">185@test.de</div>
<div class="t" style="top:449px;left:615px;color:#1e1e1e;">www.kunde185.de</div>
<div class="t" style="top:449px;left:717px;width:51px;text-align:right;color:#1e1e1e;">10531</div>
<div class="t" style="top:449px;left:772px;width:73px;text-align:right;color:#1e1e1e;">1</div>
<div class="t" style="top:449px;left:849px;width:49px;text-align:right;color:#1e1e1e;">3</div>
<div class="t" style="top:449px;left:905px;color:#1e1e1e;">KG 20</div>
<div class="t" style="top:449px;left:1009px;color:#1e1e1e;">Vertreter 9</div>
<div class="t" style="top:449px;left:1076px;color:#1e1e1e;">Branche5</div>
<div class="t" style="top:449px;left:1136px;color:#1e1e1e;">10.10.2020</div>
<div class="abs" style="left:46px;top:468px;width:1174px;height:20px;background:#fff"></div>
<div class="abs" style="left:46px;top:488px;width:1174px;height:1px;background:#cdcdcd"></div>
<div class="abs" style="left:53px;top:473px;width:9px;height:9px;border:1px solid #c4c4c4;background:#ffffff"></div>
<div class="abs" style="left:55px;top:477px;width:5px;height:1px;background:#c4c4c4"></div>
<div class="abs" style="left:57px;top:475px;width:1px;height:5px;background:#c4c4c4"></div>
<div class="t" style="top:470px;left:73px;color:#1e1e1e;">10546</div>
<div class="t" style="top:470px;left:122px;color:#1e1e1e;">MC10546</div>
<div class="t" style="top:470px;left:194px;color:#1e1e1e;">Firma 10546</div>
<div class="t" style="top:470px;left:262px;color:#1e1e1e;">Musterstraße 214</div>
<div class="t" style="top:470px;left:363px;color:#1e1e1e;">44390</div>
<div class="t" style="top:470px;left:401px;color:#1e1e1e;">Dortmund</div>
<div class="t" style="top:470px;left:497px;color:#1e1e1e;">214</div>
<div class="t" style="top:470px;left:537px;color:#3f7fc4;text-decoration:underline;">214@test.de</div>
<div class="t" style="top:470px;left:615px;color:#1e1e1e;">www.kunde214.de</div>
<div class="t" style="top:470px;left:717px;width:51px;text-align:right;color:#1e1e1e;">10546</div>
<div class="t" style="top:470px;left:772px;width:73px;text-align:right;color:#1e1e1e;">1</div>
<div class="t" style="top:470px;left:849px;width:49px;text-align:right;color:#1e1e1e;">0</div>
<div class="t" style="top:470px;left:905px;color:#1e1e1e;">KG 23</div>
<div class="t" style="top:470px;left:1009px;color:#1e1e1e;">Vertreter 7</div>
<div class="t" style="top:470px;left:1076px;color:#1e1e1e;">Branche2</div>
<div class="t" style="top:470px;left:1136px;color:#1e1e1e;">28.07.2018</div>
<div class="abs" style="left:46px;top:489px;width:1174px;height:20px;background:#dcdcdc"></div>
<div class="abs" style="left:46px;top:509px;width:1174px;height:1px;background:#cdcdcd"></div>
<div class="abs" style="left:53px;top:494px;width:9px;height:9px;border:1px solid #b2b2b2;background:#e2e2e2"></div>
<div class="abs" style="left:55px;top:498px;width:5px;height:1px;background:#a8a8a8"></div>
<div class="abs" style="left:57px;top:496px;width:1px;height:5px;background:#a8a8a8"></div>
<div class="t" style="top:491px;left:73px;color:#1e1e1e;">10550</div>
<div class="t" style="top:491px;left:122px;color:#1e1e1e;">MC10550</div>
<div class="t" style="top:491px;left:194px;color:#1e1e1e;">Firma 10550</div>
<div class="t" style="top:491px;left:262px;color:#1e1e1e;">Musterstraße 232</div>
<div class="t" style="top:491px;left:363px;color:#1e1e1e;">44914</div>
<div class="t" style="top:491px;left:401px;color:#1e1e1e;">Bochum</div>
<div class="t" style="top:491px;left:497px;color:#1e1e1e;">232</div>
<div class="t" style="top:491px;left:537px;color:#3f7fc4;text-decoration:underline;">232@test.de</div>
<div class="t" style="top:491px;left:615px;color:#1e1e1e;">www.kunde232.de</div>
<div class="t" style="top:491px;left:717px;width:51px;text-align:right;color:#1e1e1e;">10550</div>
<div class="t" style="top:491px;left:772px;width:73px;text-align:right;color:#1e1e1e;">1</div>
<div class="t" style="top:491px;left:849px;width:49px;text-align:right;color:#1e1e1e;">0</div>
<div class="t" style="top:491px;left:905px;color:#1e1e1e;">KG 23</div>
<div class="t" style="top:491px;left:1009px;color:#1e1e1e;">Vertreter 7</div>
<div class="t" style="top:491px;left:1076px;color:#1e1e1e;">Branche2</div>
<div class="t" style="top:491px;left:1136px;color:#1e1e1e;">28.07.2016</div>
<div class="abs" style="left:46px;top:510px;width:1174px;height:20px;background:#fff"></div>
<div class="abs" style="left:46px;top:530px;width:1174px;height:1px;background:#cdcdcd"></div>
<div class="abs" style="left:53px;top:515px;width:9px;height:9px;border:1px solid #c4c4c4;background:#ffffff"></div>
<div class="abs" style="left:55px;top:519px;width:5px;height:1px;background:#c4c4c4"></div>
<div class="abs" style="left:57px;top:517px;width:1px;height:5px;background:#c4c4c4"></div>
<div class="t" style="top:512px;left:73px;color:#1e1e1e;">10551</div>
<div class="t" style="top:512px;left:122px;color:#1e1e1e;">MC10551</div>
<div class="t" style="top:512px;left:194px;color:#1e1e1e;">Firma 10551</div>
<div class="t" style="top:512px;left:262px;color:#1e1e1e;">Musterstraße 283</div>
<div class="t" style="top:512px;left:363px;color:#1e1e1e;">44750</div>
<div class="t" style="top:512px;left:401px;color:#1e1e1e;">Herne</div>
<div class="t" style="top:512px;left:497px;color:#1e1e1e;">283</div>
<div class="t" style="top:512px;left:537px;color:#3f7fc4;text-decoration:underline;">283@test.de</div>
<div class="t" style="top:512px;left:615px;color:#1e1e1e;">www.kunde283.de</div>
<div class="t" style="top:512px;left:717px;width:51px;text-align:right;color:#1e1e1e;">10551</div>
<div class="t" style="top:512px;left:772px;width:73px;text-align:right;color:#1e1e1e;">1</div>
<div class="t" style="top:512px;left:849px;width:49px;text-align:right;color:#1e1e1e;">0</div>
<div class="t" style="top:512px;left:905px;color:#1e1e1e;">KG 23</div>
<div class="t" style="top:512px;left:1009px;color:#1e1e1e;">Vertreter 7</div>
<div class="t" style="top:512px;left:1076px;color:#1e1e1e;">Branche2</div>
<div class="t" style="top:512px;left:1136px;color:#1e1e1e;">19.10.2018</div>
<div class="abs" style="left:46px;top:531px;width:1174px;height:20px;background:#dcdcdc"></div>
<div class="abs" style="left:46px;top:551px;width:1174px;height:1px;background:#cdcdcd"></div>
<div class="abs" style="left:53px;top:536px;width:9px;height:9px;border:1px solid #b2b2b2;background:#e2e2e2"></div>
<div class="abs" style="left:55px;top:540px;width:5px;height:1px;background:#a8a8a8"></div>
<div class="abs" style="left:57px;top:538px;width:1px;height:5px;background:#a8a8a8"></div>
<div class="t" style="top:533px;left:73px;color:#1e1e1e;">10552</div>
<div class="t" style="top:533px;left:122px;color:#1e1e1e;">MC10552</div>
<div class="t" style="top:533px;left:194px;color:#1e1e1e;">Firma 10552</div>
<div class="t" style="top:533px;left:262px;color:#1e1e1e;">Musterstraße 83</div>
<div class="t" style="top:533px;left:363px;color:#1e1e1e;">58218</div>
<div class="t" style="top:533px;left:401px;color:#1e1e1e;">Hagen</div>
<div class="t" style="top:533px;left:497px;color:#1e1e1e;">83</div>
<div class="t" style="top:533px;left:537px;color:#3f7fc4;text-decoration:underline;">83@test.de</div>
<div class="t" style="top:533px;left:615px;color:#1e1e1e;">www.kunde83.de</div>
<div class="t" style="top:533px;left:717px;width:51px;text-align:right;color:#1e1e1e;">10552</div>
<div class="t" style="top:533px;left:772px;width:73px;text-align:right;color:#1e1e1e;">1</div>
<div class="t" style="top:533px;left:849px;width:49px;text-align:right;color:#1e1e1e;">0</div>
<div class="t" style="top:533px;left:905px;color:#1e1e1e;">KG 23</div>
<div class="t" style="top:533px;left:1009px;color:#1e1e1e;">Vertreter 7</div>
<div class="t" style="top:533px;left:1076px;color:#1e1e1e;">Branche2</div>
<div class="t" style="top:533px;left:1136px;color:#1e1e1e;">03.10.2020</div>
<div class="abs" style="left:46px;top:552px;width:1174px;height:20px;background:#fff"></div>
<div class="abs" style="left:46px;top:572px;width:1174px;height:1px;background:#cdcdcd"></div>
<div class="abs" style="left:53px;top:557px;width:9px;height:9px;border:1px solid #c4c4c4;background:#ffffff"></div>
<div class="abs" style="left:55px;top:561px;width:5px;height:1px;background:#c4c4c4"></div>
<div class="abs" style="left:57px;top:559px;width:1px;height:5px;background:#c4c4c4"></div>
<div class="t" style="top:554px;left:73px;color:#1e1e1e;">10554</div>
<div class="t" style="top:554px;left:122px;color:#1e1e1e;">MC10554</div>
<div class="t" style="top:554px;left:194px;color:#1e1e1e;">Firma 10554</div>
<div class="t" style="top:554px;left:262px;color:#1e1e1e;">Musterstraße 284</div>
<div class="t" style="top:554px;left:363px;color:#1e1e1e;">44750</div>
<div class="t" style="top:554px;left:401px;color:#1e1e1e;">Herne</div>
<div class="t" style="top:554px;left:497px;color:#1e1e1e;">284</div>
<div class="t" style="top:554px;left:537px;color:#3f7fc4;text-decoration:underline;">284@test.de</div>
<div class="t" style="top:554px;left:615px;color:#1e1e1e;">www.kunde284.de</div>
<div class="t" style="top:554px;left:717px;width:51px;text-align:right;color:#1e1e1e;">10554</div>
<div class="t" style="top:554px;left:772px;width:73px;text-align:right;color:#1e1e1e;">1</div>
<div class="t" style="top:554px;left:849px;width:49px;text-align:right;color:#1e1e1e;">0</div>
<div class="t" style="top:554px;left:905px;color:#1e1e1e;">KG 23</div>
<div class="t" style="top:554px;left:1009px;color:#1e1e1e;">Vertreter 7</div>
<div class="t" style="top:554px;left:1076px;color:#1e1e1e;">Branche2</div>
<div class="t" style="top:554px;left:1136px;color:#1e1e1e;">22.03.2020</div>
<div class="abs" style="left:46px;top:573px;width:1174px;height:20px;background:#dcdcdc"></div>
<div class="abs" style="left:46px;top:593px;width:1174px;height:1px;background:#cdcdcd"></div>
<div class="abs" style="left:53px;top:578px;width:9px;height:9px;border:1px solid #b2b2b2;background:#e2e2e2"></div>
<div class="abs" style="left:55px;top:582px;width:5px;height:1px;background:#a8a8a8"></div>
<div class="abs" style="left:57px;top:580px;width:1px;height:5px;background:#a8a8a8"></div>
<div class="t" style="top:575px;left:73px;color:#1e1e1e;">10558</div>
<div class="t" style="top:575px;left:122px;color:#1e1e1e;">MC10558</div>
<div class="t" style="top:575px;left:194px;color:#1e1e1e;">Firma 10558</div>
<div class="t" style="top:575px;left:262px;color:#1e1e1e;">Musterstraße 106</div>
<div class="t" style="top:575px;left:363px;color:#1e1e1e;">45254</div>
<div class="t" style="top:575px;left:401px;color:#1e1e1e;">Essen</div>
<div class="t" style="top:575px;left:497px;color:#1e1e1e;">106</div>
<div class="t" style="top:575px;left:537px;color:#3f7fc4;text-decoration:underline;">106@test.de</div>
<div class="t" style="top:575px;left:615px;color:#1e1e1e;">www.kunde106.de</div>
<div class="t" style="top:575px;left:717px;width:51px;text-align:right;color:#1e1e1e;">10558</div>
<div class="t" style="top:575px;left:772px;width:73px;text-align:right;color:#1e1e1e;">1</div>
<div class="t" style="top:575px;left:849px;width:49px;text-align:right;color:#1e1e1e;">0</div>
<div class="t" style="top:575px;left:905px;color:#1e1e1e;">KG 23</div>
<div class="t" style="top:575px;left:1009px;color:#1e1e1e;">Vertreter 5</div>
<div class="t" style="top:575px;left:1076px;color:#1e1e1e;">Branche2</div>
<div class="t" style="top:575px;left:1136px;color:#1e1e1e;">05.08.2020</div>
<div class="abs" style="left:46px;top:594px;width:1174px;height:18px;background:#fff"></div>
<div class="abs" style="left:53px;top:599px;width:9px;height:9px;border:1px solid #c4c4c4;background:#ffffff"></div>
<div class="abs" style="left:55px;top:603px;width:5px;height:1px;background:#c4c4c4"></div>
<div class="abs" style="left:57px;top:601px;width:1px;height:5px;background:#c4c4c4"></div>
<div class="t" style="top:596px;left:73px;color:#1e1e1e;">10559</div>
<div class="t" style="top:596px;left:122px;color:#1e1e1e;">MC10559</div>
<div class="t" style="top:596px;left:194px;color:#1e1e1e;">Firma 10559</div>
<div class="t" style="top:596px;left:262px;color:#1e1e1e;">Musterstraße 115</div>
<div class="t" style="top:596px;left:363px;color:#1e1e1e;">45253</div>
<div class="t" style="top:596px;left:401px;color:#1e1e1e;">Essen</div>
<div class="t" style="top:596px;left:497px;color:#1e1e1e;">115</div>
<div class="t" style="top:596px;left:537px;color:#3f7fc4;text-decoration:underline;">115@test.de</div>
<div class="t" style="top:596px;left:615px;color:#1e1e1e;">www.kunde115.de</div>
<div class="t" style="top:596px;left:717px;width:51px;text-align:right;color:#1e1e1e;">10559</div>
<div class="t" style="top:596px;left:772px;width:73px;text-align:right;color:#1e1e1e;">1</div>
<div class="t" style="top:596px;left:849px;width:49px;text-align:right;color:#1e1e1e;">0</div>
<div class="t" style="top:596px;left:905px;color:#1e1e1e;">KG 23</div>
<div class="t" style="top:596px;left:1009px;color:#1e1e1e;">Vertreter 5</div>
<div class="t" style="top:596px;left:1076px;color:#1e1e1e;">Branche2</div>
<div class="t" style="top:596px;left:1136px;color:#1e1e1e;">01.05.2020</div>
<div class="abs" style="left:23px;top:195px;width:22px;height:417px;background:#fff"></div>
<div class="abs" style="left:45px;top:195px;width:1px;height:417px;background:#cdcdcd"></div>
<div class="abs" style="left:118px;top:195px;width:1px;height:417px;background:#cdcdcd"></div>
<div class="abs" style="left:190px;top:195px;width:1px;height:417px;background:#cdcdcd"></div>
<div class="abs" style="left:258px;top:195px;width:1px;height:417px;background:#cdcdcd"></div>
<div class="abs" style="left:358px;top:195px;width:1px;height:417px;background:#cdcdcd"></div>
<div class="abs" style="left:397px;top:195px;width:1px;height:417px;background:#cdcdcd"></div>
<div class="abs" style="left:492px;top:195px;width:1px;height:417px;background:#cdcdcd"></div>
<div class="abs" style="left:532px;top:195px;width:1px;height:417px;background:#cdcdcd"></div>
<div class="abs" style="left:610px;top:195px;width:1px;height:417px;background:#cdcdcd"></div>
<div class="abs" style="left:716px;top:195px;width:1px;height:417px;background:#cdcdcd"></div>
<div class="abs" style="left:771px;top:195px;width:1px;height:417px;background:#cdcdcd"></div>
<div class="abs" style="left:848px;top:195px;width:1px;height:417px;background:#cdcdcd"></div>
<div class="abs" style="left:901px;top:195px;width:1px;height:417px;background:#cdcdcd"></div>
<div class="abs" style="left:1004px;top:195px;width:1px;height:417px;background:#cdcdcd"></div>
<div class="abs" style="left:1072px;top:195px;width:1px;height:417px;background:#cdcdcd"></div>
<div class="abs" style="left:1131px;top:195px;width:1px;height:417px;background:#cdcdcd"></div>
<div class="abs" style="left:1220px;top:195px;width:1px;height:417px;background:#cdcdcd"></div>
<div class="abs" style="left:1221px;top:195px;width:15px;height:417px;background:#fff"></div>
<div class="abs" style="left:1236px;top:195px;width:17px;height:417px;background:#f0f0f0"></div>
<div class="abs bd" style="left:1237px;top:196px;width:15px;height:16px;background:#fff"></div>
<svg class="abs" style="left:1241px;top:201px" width="7" height="4"><path d="M3.5 0L7 4H0Z" fill="#6a6a6a"/></svg>
<div class="abs bd" style="left:1237px;top:231px;width:15px;height:17px;background:#fff"></div>
<div class="abs bd" style="left:1237px;top:595px;width:15px;height:16px;background:#fff"></div>
<svg class="abs" style="left:1241px;top:602px" width="7" height="4"><path d="M0 0H7L3.5 4Z" fill="#6a6a6a"/></svg>
</body></html>
